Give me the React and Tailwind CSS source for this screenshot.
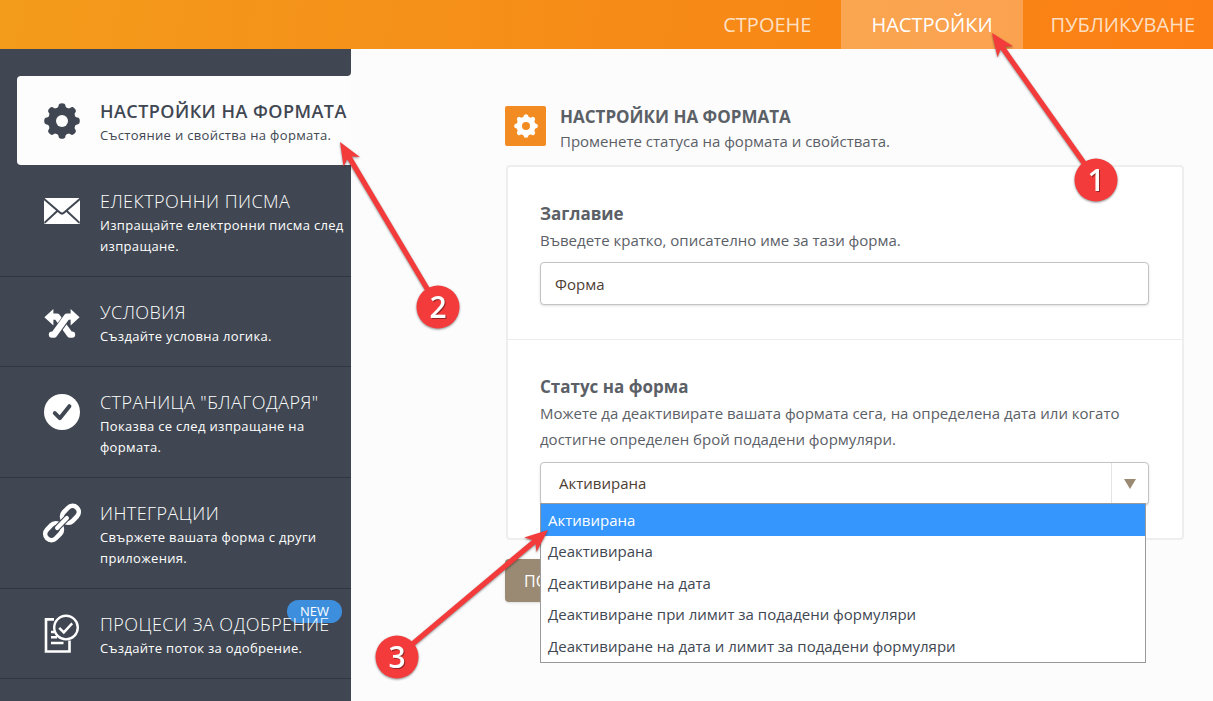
import React from "react";

const TEETH = [0, 45, 90, 135, 180, 225, 270, 315];

function Gear({ className, hole }) {
  return (
    <svg viewBox="0 0 36 36" className={className} fill="currentColor" aria-hidden="true">
      {TEETH.map((a) => (
        <path key={a} d="M11.2 5.8C13.6 5.2 14.4 4.2 14.6 2.6Q14.9 0.2 18 0.2T21.4 2.6C21.6 4.2 22.4 5.2 24.8 5.8L20 12H16Z" transform={`rotate(${a} 18 18)`} />
      ))}
      <circle cx="18" cy="18" r="13.6" />
      <circle cx="18" cy="18" r="6" className={hole} />
    </svg>
  );
}

function Mail() {
  return (
    <svg viewBox="0 0 36 36" className="size-9" aria-hidden="true">
      <rect y="5" width="36" height="26" rx="1.5" fill="#fff" />
      <path d="M-.5 5.5 15.8 19.6Q18 21.6 20.2 19.6L36.5 5.5M.5 29.8 13 18.2M35.5 29.8 23 18.2" fill="none" stroke="#404752" strokeWidth="2" />
    </svg>
  );
}

function Crossed() {
  return (
    <svg viewBox="0 0 36 36" className="size-9" fill="none" strokeLinejoin="round" strokeLinecap="round" aria-hidden="true">
      <path d="M.4 13.2 9.4 5v16.4Z" fill="#fff" />
      <path d="M35.6 13.2 26.6 5v16.4Z" fill="#fff" />
      <path d="M10 12.6H13L26 30.6H28" stroke="#fff" strokeWidth="6.4" />
      <path d="M22 14.4 12.5 27.6" stroke="#404752" strokeWidth="8" strokeLinecap="butt" />
      <path d="M26 12.6H23L10 30.6H8" stroke="#fff" strokeWidth="6.4" />
    </svg>
  );
}

function Check() {
  return (
    <svg viewBox="0 0 36 36" className="size-9" aria-hidden="true">
      <circle cx="18" cy="18" r="18" fill="#fff" />
      <path d="m10.8 19.2 5 5 9.6-12" fill="none" stroke="#404752" strokeWidth="4" strokeLinecap="round" strokeLinejoin="round" />
    </svg>
  );
}

function Chain() {
  return (
    <svg viewBox="0 0 36 36" className="size-9 overflow-visible" aria-hidden="true">
      <g transform="rotate(-46 18 18)" fill="none" stroke="#fff" strokeWidth="4.6">
        <rect x="-3.4" y="11.8" width="18.6" height="12.4" rx="6.2" />
        <rect x="20.8" y="11.8" width="18.6" height="12.4" rx="6.2" />
        <path d="M11 18h14" stroke="#404752" strokeWidth="6.4" strokeLinecap="round" />
        <path d="M11 18h14" strokeWidth="4.2" strokeLinecap="round" />
      </g>
    </svg>
  );
}

function Approval() {
  return (
    <svg viewBox="0 0 36 40" className="h-10 w-9 overflow-visible" fill="none" stroke="#fff" aria-hidden="true">
      <path d="M10 3.4H2V35.5H25.5V24.5" strokeWidth="2.6" />
      <path d="M7 16h3.5M7 21.3h6M7 27h12.5" strokeWidth="2.4" />
      <circle cx="22" cy="11.6" r="11.8" strokeWidth="2.4" />
      <path d="m15.2 11.8 4.6 4.6 8.4-9" strokeWidth="2.4" />
    </svg>
  );
}

const ITEMS = [
  { id: "emails", title: "ЕЛЕКТРОННИ ПИСМА", text: "Изпращайте електронни писма след изпращане.", icon: <Mail /> },
  { id: "conditions", title: "УСЛОВИЯ", text: "Създайте условна логика.", icon: <Crossed /> },
  { id: "thanks", title: "СТРАНИЦА \"БЛАГОДАРЯ\"", text: "Показва се след изпращане на формата.", icon: <Check /> },
  { id: "integrations", title: "ИНТЕГРАЦИИ", text: "Свържете вашата форма с други приложения.", icon: <Chain /> },
  { id: "approvals", title: "ПРОЦЕСИ ЗА ОДОБРЕНИЕ", text: "Създайте поток за одобрение.", icon: <Approval />, badge: "NEW" },
];

const OPTIONS = [
  "Активирана",
  "Деактивирана",
  "Деактивиране на дата",
  "Деактивиране при лимит за подадени формуляри",
  "Деактивиране на дата и лимит за подадени формуляри",
];

const MARKS = [
  { n: "1", x: 1096, y: 180, tx: 992, ty: 33 },
  { n: "2", x: 438, y: 307, tx: 340, ty: 142 },
  { n: "3", x: 397, y: 657, tx: 548, ty: 530 },
];

function Callouts() {
  return (
    <svg className="pointer-events-none absolute top-0 left-0 z-20 h-[701px] w-[1213px] drop-shadow-[0_1px_1px_rgba(0,0,0,0.45)]" viewBox="0 0 1213 701">
      {MARKS.map(({ n, x, y, tx, ty }) => {
        const angle = (Math.atan2(y - ty, x - tx) * 180) / Math.PI;
        const length = Math.hypot(x - tx, y - ty);
        return (
          <g key={n} fill="#f43b3b">
            <g transform={`translate(${tx} ${ty}) rotate(${angle})`}>
              <path d={`M0 0 23-9.5 18.5-2.6H${length}V2.6H18.5L23 9.5Z`} />
            </g>
            <circle cx={x} cy={y} r="21.5" />
            <text x={x} y={y + 11} textAnchor="middle" fill="#fff" className="font-['Open_Sans',sans-serif] text-[30px] font-semibold drop-shadow-[1px_1px_0_rgba(0,0,0,0.4)]">
              {n}
            </text>
          </g>
        );
      })}
    </svg>
  );
}

export default function App() {
  return (
    <div className="relative flex min-h-screen flex-col overflow-hidden bg-[#fcfcfc] font-['Open_Sans','Noto_Sans',sans-serif] text-[#5b6067]">
      <header className="bg-linear-100 from-[#f39b1b] via-[#f68c17] to-[#fc7f15]">
        <nav className="flex h-[49px] items-stretch justify-end text-xl text-white/75">
          <a href="#build" className="flex items-center px-[30px]">СТРОЕНЕ</a>
          <a href="#settings" aria-current="page" className="flex items-center bg-white/25 px-[30px] text-white">НАСТРОЙКИ</a>
          <a href="#publish" className="flex items-center pr-[18px] pl-7">ПУБЛИКУВАНЕ</a>
        </nav>
      </header>

      <div className="flex flex-1">
        <aside className="flex w-[351px] shrink-0 flex-col">
          <div className="h-[27px] rounded-br bg-[#404752]" />
          <ul className="flex flex-col text-white">
            <li className="border-b border-[#404752] bg-[#404752] pl-[17px]">
              <a href="#form" className="flex gap-5 rounded-l bg-[#fdfdfd] pt-[22px] pb-[19px] pl-[27px] text-[#404752]">
                <Gear className="mt-[5px] size-9 shrink-0" hole="fill-[#fdfdfd]" />
                <span className="flex flex-col gap-px">
                  <span className="text-lg leading-[26px] font-semibold tracking-wide whitespace-nowrap">НАСТРОЙКИ НА ФОРМАТА</span>
                  <span className="text-[13px] leading-[21px] font-medium tracking-wide whitespace-nowrap">Състояние и свойства на формата.</span>
                </span>
              </a>
            </li>
            {ITEMS.map(({ id, title, text, icon, badge }) => (
              <li key={id} className="border-b border-[#30363f] bg-[#404752]">
                <a href={"#" + id} className="relative flex gap-5 pt-[22px] pb-[19px] pl-11">
                  <span className="mt-[5px] shrink-0">{icon}</span>
                  {badge && (
                    <span className="absolute top-[11px] right-[9px] rounded-full bg-[#3d8fde] px-[13px] text-[13px] leading-[23px]">{badge}</span>
                  )}
                  <span className="relative flex flex-col gap-px">
                    <span className="text-lg leading-[26px] font-light tracking-wide whitespace-nowrap">{title}</span>
                    <span className="text-[13px] leading-[21px] tracking-wide">{text}</span>
                  </span>
                </a>
              </li>
            ))}
          </ul>
          <div className="flex-1 bg-[#404752]" />
        </aside>

        <main className="flex-1 pt-14 pr-[29px] pl-[154px]">
          <div className="flex gap-[14px]">
            <div className="mt-px flex h-10 w-[41px] items-center justify-center rounded-xs bg-[#f18b22] text-white">
              <Gear className="size-6" hole="fill-[#f18b22]" />
            </div>
            <div>
              <h1 className="text-[17px] leading-6 font-bold">НАСТРОЙКИ НА ФОРМАТА</h1>
              <p className="text-[15px] leading-6">Променете статуса на формата и свойствата.</p>
            </div>
          </div>

          <form className="mt-3 ml-px rounded border-2 border-[#eeeeef] bg-white">
            <div className="border-b border-[#ececee] pt-[34px] pr-[33px] pb-[34px] pl-8">
              <label htmlFor="title" className="block text-[17px] leading-[26px] font-bold">Заглавие</label>
              <p className="text-[15px] leading-[26px]">Въведете кратко, описателно име за тази форма.</p>
              <input id="title" defaultValue="Форма" className="mt-[9px] block h-[43px] w-full rounded border border-[#c3c3c5] bg-white px-[14px] text-[15px] text-[#4d4033] shadow-sm" />
            </div>
            <div className="pt-[34px] pr-[33px] pb-[33px] pl-8">
              <label htmlFor="status" className="block text-[17px] leading-[26px] font-bold">Статус на форма</label>
              <p className="text-[15px] leading-[26px]">Можете да деактивирате вашата формата сега, на определена дата или когато достигне определен брой подадени формуляри.</p>
              <div className="relative mt-[10px]">
                <select id="status" className="block h-[43px] w-full appearance-none rounded border border-[#c3c3c5] bg-white px-[18px] text-[15px] text-[#4d4033] shadow-sm">
                  {OPTIONS.map((o) => <option key={o}>{o}</option>)}
                </select>
                <div className="pointer-events-none absolute inset-y-px right-px flex w-[37px] items-center justify-center border-l border-[#e4e4e6]">
                  <svg viewBox="0 0 12 10" className="h-[10px] w-3" aria-hidden="true"><path d="M0 0h12L6 10Z" fill="#9a8a73" /></svg>
                </div>
                <ul role="listbox" aria-label="Статус на форма" className="absolute top-[41px] right-[3px] left-0 z-10 flex h-40 flex-col border border-[#9a9a9c] bg-white text-[15px] text-[#404752]">
                  {OPTIONS.map((o, i) => (
                    <li key={o} role="option" aria-selected={i === 0} className="flex flex-1 items-center px-[7px] aria-selected:bg-[#3597fe] aria-selected:text-white">{o}</li>
                  ))}
                </ul>
              </div>
            </div>
          </form>
          <button type="button" className="mt-[19px] h-[43px] rounded bg-[#9a8a73] px-[19px] text-base text-white shadow-sm">ПОКАЖИ</button>
        </main>
      </div>
      <Callouts />
    </div>
  );
}
